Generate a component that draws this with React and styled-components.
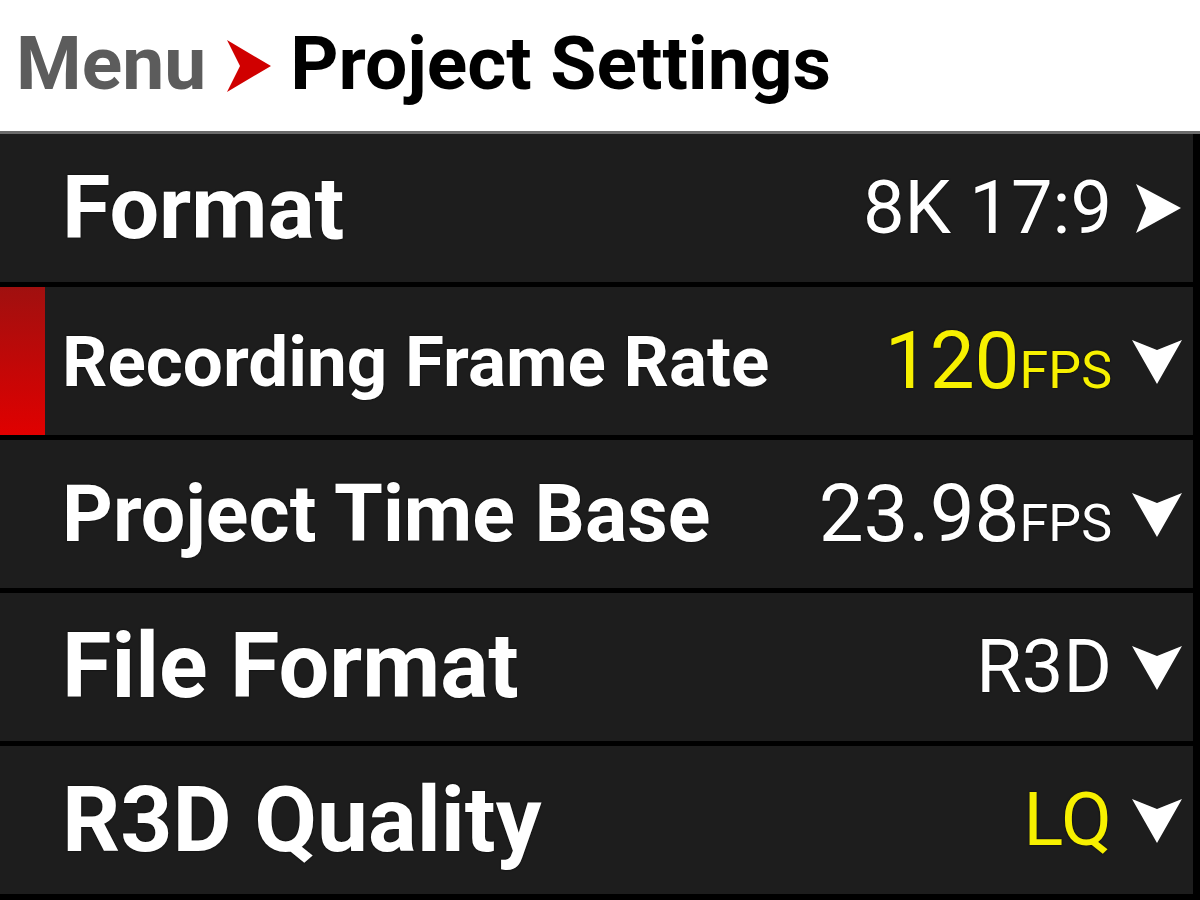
import React from "react";
import styled, { createGlobalStyle } from "styled-components";

const GlobalStyle = createGlobalStyle`
  html, body {
    margin: 0;
    padding: 0;
    background: #000;
  }
`;

const Screen = styled.div`
  width: 1200px;
  height: 900px;
  background: #000;
  display: flex;
  flex-direction: column;
  overflow: hidden;
  font-family: Roboto, "Liberation Sans", sans-serif;
`;

const Header = styled.div`
  height: 134px;
  flex-shrink: 0;
  background: #fff;
  border-bottom: 3px solid #6b6b6b;
  display: flex;
  align-items: center;
  padding-left: 16px;
  gap: 19px;
  box-sizing: border-box;
`;

const Crumb = styled.span`
  font-size: 75px;
  font-weight: 700;
  color: ${(p) => (p.$dim ? "#5c5c5c" : "#000")};
  line-height: 1;
  margin-top: -4px;
`;

const List = styled.div`
  display: flex;
  flex-direction: column;
  gap: 5px;
  padding-right: 7px;
`;

const Row = styled.div`
  height: 148px;
  flex-shrink: 0;
  background: #1d1d1d;
  display: flex;
  align-items: center;
  padding-left: ${(p) => (p.$active ? 0 : 62)}px;
  padding-right: 11px;
  box-sizing: border-box;
  text-shadow: 0 0 2px #000;
`;

const Marker = styled.div`
  width: 45px;
  align-self: stretch;
  margin-right: 17px;
  background: linear-gradient(to bottom, #a0100f, #e00000);
`;

const Label = styled.span`
  flex: 1;
  color: #fff;
  font-weight: 700;
  font-size: ${(p) => p.$size}px;
  line-height: 1;
  white-space: nowrap;
`;

const Value = styled.span`
  color: ${(p) => (p.$highlight ? "#f7f000" : "#fff")};
  font-size: ${(p) => p.$size}px;
  font-weight: 400;
  line-height: 1;
  white-space: nowrap;
`;

const Unit = styled.span`
  font-size: 52px;
`;

const ArrowBox = styled.span`
  width: 50px;
  height: 50px;
  margin-left: 20px;
  display: flex;
  align-items: center;
  justify-content: center;
`;

const Chevron = () => (
  <svg width="46" height="52" viewBox="0 0 46 52">
    <polygon points="2,0 46,26 2,52 15,26" fill="#d00000" />
  </svg>
);

const Arrow = ({ down }) => (
  <ArrowBox>
    {down ? (
      <svg width="50" height="46" viewBox="0 0 50 46">
        <polygon points="0,2 25,12 50,2 25,46" fill="#fff" />
      </svg>
    ) : (
      <svg width="47" height="49" viewBox="0 0 47 49">
        <polygon points="2,0 47,24 2,49 12,24" fill="#fff" />
      </svg>
    )}
  </ArrowBox>
);

const rows = [
  { label: "Format", size: 88, value: "8K 17:9", valueSize: 74 },
  { label: "Recording Frame Rate", size: 71, value: "120", valueSize: 80, unit: "FPS", highlight: true, active: true, down: true },
  { label: "Project Time Base", size: 79, value: "23.98", valueSize: 80, unit: "FPS", down: true },
  { label: "File Format", size: 90, value: "R3D", valueSize: 74, down: true },
  { label: "R3D Quality", size: 91, value: "LQ", valueSize: 74, highlight: true, down: true },
];

const App = () => {
  return (
    <Screen>
      <GlobalStyle />
      <Header>
        <Crumb $dim>Menu</Crumb>
        <Chevron />
        <Crumb>Project Settings</Crumb>
      </Header>
      <List>
        {rows.map((r) => (
          <Row key={r.label} $active={r.active}>
            {r.active && <Marker />}
            <Label $size={r.size}>{r.label}</Label>
            <Value $highlight={r.highlight} $size={r.valueSize}>
              {r.value}
              {r.unit && <Unit>{r.unit}</Unit>}
            </Value>
            <Arrow down={r.down} />
          </Row>
        ))}
      </List>
    </Screen>
  );
};

export default App;
